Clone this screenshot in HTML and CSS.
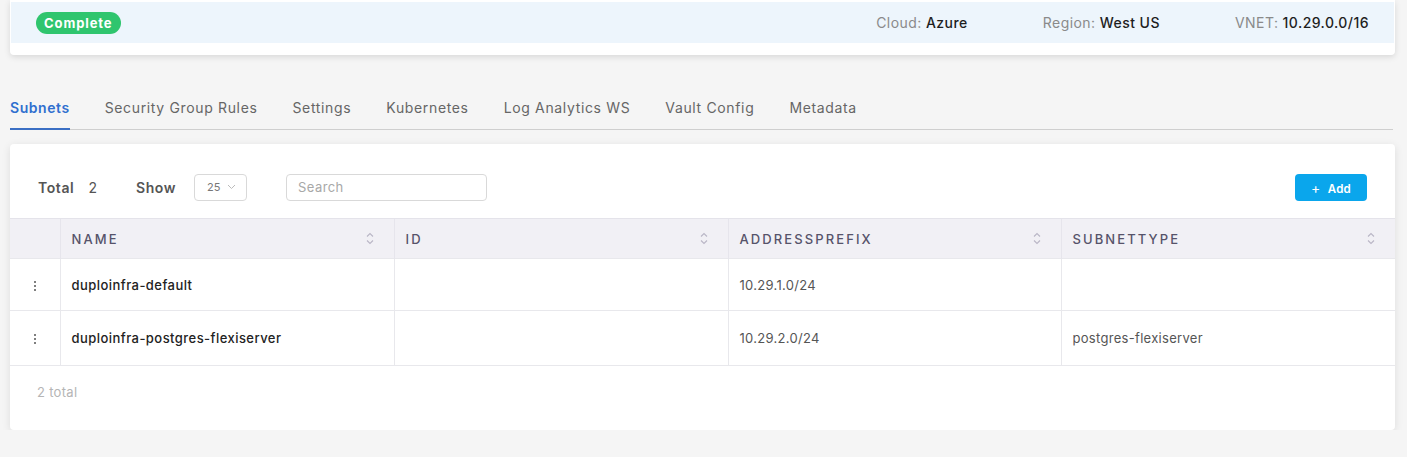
FILE: index.html
```html
<!DOCTYPE html>
<html>
<head>
<meta charset="utf-8">
<link rel="stylesheet" href="styles.css">
</head>
<body>
<div class="info-card">
  <div class="info-band">
    <span class="badge">Complete</span>
    <div class="meta">
      <span class="meta-item"><span class="meta-label">Cloud:</span> Azure</span>
      <span class="meta-item"><span class="meta-label">Region:</span> West US</span>
      <span class="meta-item"><span class="meta-label">VNET:</span> 10.29.0.0/16</span>
    </div>
  </div>
</div>

<nav class="tabs">
  <span class="tab active">Subnets</span>
  <span class="tab">Security Group Rules</span>
  <span class="tab">Settings</span>
  <span class="tab">Kubernetes</span>
  <span class="tab">Log Analytics WS</span>
  <span class="tab">Vault Config</span>
  <span class="tab">Metadata</span>
</nav>

<div class="card">
  <div class="toolbar">
    <span class="tb-label">Total</span>
    <span class="tb-count">2</span>
    <span class="tb-label show">Show</span>
    <div class="select">25
      <svg class="chev" width="9" height="6" viewBox="0 0 9 6"><path d="M1 1l3.5 3.5L8 1" fill="none" stroke="#bbb" stroke-width="1"/></svg>
    </div>
    <div class="search">Search</div>
    <div class="spacer"></div>
    <button class="add"><span class="plus">+</span> Add</button>
  </div>

  <table class="grid">
    <colgroup>
      <col class="c-act"><col class="c-name"><col class="c-id"><col class="c-addr"><col>
    </colgroup>
    <thead>
      <tr>
        <th></th>
        <th><div class="th-in">NAME<svg class="sort" width="8" height="13" viewBox="0 0 8 13"><path d="M1 4.5l3-3 3 3M1 8.5l3 3 3-3" fill="none" stroke="#b9b6c6" stroke-width="1.1"/></svg></div></th>
        <th><div class="th-in">ID<svg class="sort" width="8" height="13" viewBox="0 0 8 13"><path d="M1 4.5l3-3 3 3M1 8.5l3 3 3-3" fill="none" stroke="#b9b6c6" stroke-width="1.1"/></svg></div></th>
        <th><div class="th-in">ADDRESSPREFIX<svg class="sort" width="8" height="13" viewBox="0 0 8 13"><path d="M1 4.5l3-3 3 3M1 8.5l3 3 3-3" fill="none" stroke="#b9b6c6" stroke-width="1.1"/></svg></div></th>
        <th><div class="th-in">SUBNETTYPE<svg class="sort" width="8" height="13" viewBox="0 0 8 13"><path d="M1 4.5l3-3 3 3M1 8.5l3 3 3-3" fill="none" stroke="#b9b6c6" stroke-width="1.1"/></svg></div></th>
      </tr>
    </thead>
    <tbody>
      <tr class="r1">
        <td class="act"><span class="kebab"><i></i><i></i><i></i></span></td>
        <td class="name">duploinfra-default</td>
        <td></td>
        <td>10.29.1.0/24</td>
        <td></td>
      </tr>
      <tr class="r2">
        <td class="act"><span class="kebab"><i></i><i></i><i></i></span></td>
        <td class="name">duploinfra-postgres-flexiserver</td>
        <td></td>
        <td>10.29.2.0/24</td>
        <td>postgres-flexiserver</td>
      </tr>
    </tbody>
  </table>

  <div class="footer">2 total</div>
</div>
</body>
</html>
```

FILE: styles.css
```css
* { box-sizing: border-box; }
body {
  margin: 0;
  background: #f5f5f5;
  font-family: Inter, "Open Sans", "Noto Sans", sans-serif;
  color: #222;
  font-size: 14px;
}

.info-card {
  margin: 0 12px 0 10px;
  background: #fff;
  padding: 2px 1px 12px 1px;
  border-radius: 0 0 4px 4px;
  box-shadow: 0 2px 6px rgba(0,0,0,0.12);
}
.info-band {
  background: #edf5fc;
  height: 41px;
  display: flex;
  align-items: center;
  padding: 0 25px 0 25px;
}
.badge {
  background: #2fc56e;
  color: #fff;
  font-weight: 700;
  font-size: 13px;
  line-height: 22px;
  height: 22px;
  padding: 0 8px;
  border-radius: 11px;
  letter-spacing: 0.9px;
}
.meta {
  margin-left: auto;
  display: flex;
  gap: 75px;
}
.meta-item { font-size: 14px; font-weight: 500; color: #1e1e1e; letter-spacing: 0.45px; }
.meta-label { color: #8a8a8a; font-weight: 400; }

.tabs {
  display: flex;
  gap: 35px;
  margin: 43px 14px 0 10px;
  border-bottom: 1px solid #cfcfcf;
}
.tab {
  font-size: 14px;
  line-height: 20px;
  padding-bottom: 10px;
  color: #666;
  border-bottom: 2px solid transparent;
  letter-spacing: 0.65px;
  margin-bottom: -1px;
}
.tab.active {
  color: #2f6fcf;
  font-weight: 600;
  letter-spacing: 0.55px;
  border-bottom-color: #3a6fc4;
}

.card {
  margin: 14px 12px 0 10px;
  background: #fff;
  border-radius: 4px;
  box-shadow: 0 2px 8px rgba(0,0,0,0.10);
}
.toolbar {
  display: flex;
  align-items: center;
  padding: 29px 28px 17px 28px;
  height: 74px;
}
.tb-label { font-size: 14px; font-weight: 600; color: #555; letter-spacing: 0.6px; }
.tb-count { font-size: 14px; color: #555; margin-left: 14px; }
.show { margin-left: 39px; }
.select {
  margin-left: 18px;
  width: 53px;
  height: 27px;
  border: 1px solid #d9d9d9;
  border-radius: 4px;
  font-size: 11px;
  color: #777;
  display: flex;
  align-items: center;
  padding-left: 12px;
  gap: 6px;
}
.search {
  margin-left: 39px;
  width: 201px;
  height: 27px;
  border: 1px solid #d9d9d9;
  border-radius: 4px;
  font-size: 13px;
  color: #a8a8a8;
  display: flex;
  align-items: center;
  padding-left: 11px;
  letter-spacing: 0.4px;
}
.spacer { flex: 1; }
.add {
  background: #0aa6ec;
  color: #fff;
  border: 0;
  border-radius: 4px;
  height: 27px;
  width: 72px;
  font-family: inherit;
  font-size: 11.5px;
  font-weight: 600;
  padding: 0;
  letter-spacing: 0.3px;
}
.plus { font-size: 14px; font-weight: 400; margin-right: 4px; }

.grid {
  width: 100%;
  border-collapse: collapse;
  table-layout: fixed;
}
.c-act { width: 50px; }
.c-name { width: 334px; }
.c-id { width: 334px; }
.c-addr { width: 333px; }
.grid th {
  background: #f1f0f5;
  height: 40px;
  border-top: 1px solid #e4e3ea;
  border-left: 1px solid #e6e5ec;
  text-align: left;
  padding: 0 20px 0 11px;
  font-size: 13px;
  font-weight: 500;
  color: #56536a;
  letter-spacing: 2.1px;
}
.grid th:first-child { border-left: 0; }
.th-in { display: flex; align-items: center; justify-content: space-between; }
.sort { flex: none; }
.grid td {
  border-top: 1px solid #e8e8ec;
  border-left: 1px solid #e8e8ec;
  padding: 0 11px;
  font-size: 13px;
  color: #555;
  letter-spacing: 0.3px;
}
.grid tr.r1 td { height: 52px; }
.grid tr.r2 td { height: 55px; }
.grid td:first-child { border-left: 0; }
.grid tbody tr:last-child td { border-bottom: 1px solid #e8e8ec; }
.grid td.name { color: #222; font-weight: 500; letter-spacing: 0.45px; }
.grid td.act { text-align: center; padding: 0; }
.kebab { display: inline-flex; flex-direction: column; gap: 2px; vertical-align: middle; }
.kebab i { width: 2px; height: 2px; background: #555; border-radius: 1px; display: block; }
.footer {
  height: 64px;
  padding: 18px 27px;
  font-size: 13px;
  color: #b5b5b5;
  letter-spacing: 0.3px;
}
```
